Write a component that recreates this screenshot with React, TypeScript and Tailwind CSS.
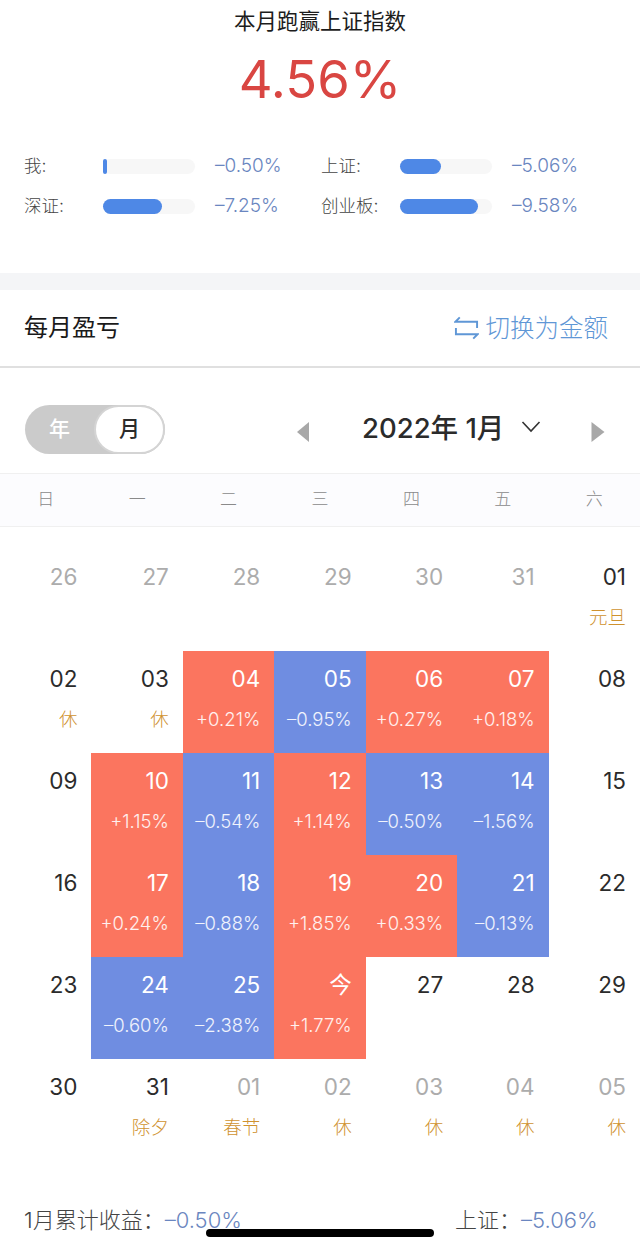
const FONT = '[font-family:Inter,"Noto_Sans_CJK_SC",sans-serif]';

const stats = [
  { label: '我:', pct: 4, value: '–0.50%' },
  { label: '上证:', pct: 45, value: '–5.06%' },
  { label: '深证:', pct: 64, value: '–7.25%' },
  { label: '创业板:', pct: 85, value: '–9.58%' },
];

type Day = { d: string; sub?: string; tone?: 'up' | 'down'; muted?: boolean };

const days: Day[] = [
  { d: '26', muted: true },
  { d: '27', muted: true },
  { d: '28', muted: true },
  { d: '29', muted: true },
  { d: '30', muted: true },
  { d: '31', muted: true },
  { d: '01', sub: '元旦' },
  { d: '02', sub: '休' },
  { d: '03', sub: '休' },
  { d: '04', sub: '+0.21%', tone: 'up' },
  { d: '05', sub: '–0.95%', tone: 'down' },
  { d: '06', sub: '+0.27%', tone: 'up' },
  { d: '07', sub: '+0.18%', tone: 'up' },
  { d: '08' },
  { d: '09' },
  { d: '10', sub: '+1.15%', tone: 'up' },
  { d: '11', sub: '–0.54%', tone: 'down' },
  { d: '12', sub: '+1.14%', tone: 'up' },
  { d: '13', sub: '–0.50%', tone: 'down' },
  { d: '14', sub: '–1.56%', tone: 'down' },
  { d: '15' },
  { d: '16' },
  { d: '17', sub: '+0.24%', tone: 'up' },
  { d: '18', sub: '–0.88%', tone: 'down' },
  { d: '19', sub: '+1.85%', tone: 'up' },
  { d: '20', sub: '+0.33%', tone: 'up' },
  { d: '21', sub: '–0.13%', tone: 'down' },
  { d: '22' },
  { d: '23' },
  { d: '24', sub: '–0.60%', tone: 'down' },
  { d: '25', sub: '–2.38%', tone: 'down' },
  { d: '今', sub: '+1.77%', tone: 'up' },
  { d: '27' },
  { d: '28' },
  { d: '29' },
  { d: '30' },
  { d: '31', sub: '除夕' },
  { d: '01', sub: '春节', muted: true },
  { d: '02', sub: '休', muted: true },
  { d: '03', sub: '休', muted: true },
  { d: '04', sub: '休', muted: true },
  { d: '05', sub: '休', muted: true },
];

function DayCell({ day }: { day: Day }) {
  const bg = day.tone === 'up' ? 'bg-[#fb755f]' : day.tone === 'down' ? 'bg-[#6f8de1]' : '';
  const numColor = day.tone ? 'text-white' : day.muted ? 'text-[#acacac]' : 'text-[#2b2b2b]';
  const subClass = day.tone ? 'font-light text-white/90' : 'font-light text-[#cf922f]';
  return (
    <div className={`flex h-[102px] flex-col items-end pr-[14px] ${bg}`}>
      <div className={`mt-[14px] h-[28px] text-[22.5px] leading-[28px] ${numColor}`}>{day.d}</div>
      {day.sub && <div className={`mt-[14px] text-[18.5px] leading-[24px] ${subClass}`}>{day.sub}</div>}
    </div>
  );
}

export default function App() {
  return (
    <div className={`relative h-[1249px] w-[640px] overflow-hidden bg-white ${FONT}`}>
      <div className="pt-[8px] text-center text-[21.5px] leading-[26px] text-[#1c1c1c]">本月跑赢上证指数</div>
      <div className="mt-[7px] text-center text-[52.5px] leading-[76px] text-[#d94642]">4.56%</div>

      <div className="mt-[39px] grid grid-cols-[297px_1fr] gap-y-[20px] pl-[24px]">
        {stats.map((s) => (
          <div key={s.label} className="flex h-[20px] items-center">
            <div className="w-[79px] text-[17.5px] font-light text-[#444]">{s.label}</div>
            <div className="h-[15px] w-[92px] rounded-full bg-[#f7f7f7]">
              <div className="h-full rounded-full bg-[#4e88e6]" style={{ width: `${s.pct}%` }} />
            </div>
            <div className="ml-[20px] text-[19px] font-light text-[#6a86c0]">{s.value}</div>
          </div>
        ))}
      </div>

      <div className="mt-[57px] h-[17px] bg-[#f4f5f7]" />

      <div className="flex h-[78px] items-center justify-between border-b-2 border-[#e0e0e0] pr-[32px] pl-[24px]">
        <div className="text-[24px] text-[#1a1a1a]">每月盈亏</div>
        <div className="flex items-center gap-[7px] text-[24.5px] font-light text-[#5f97d6]">
          <svg width="25" height="26" viewBox="0 0 26 26" fill="none" stroke="#5f97d6" strokeWidth="2">
            <path d="M6 2 L1.5 6.5 H24 V13" />
            <path d="M20 24 L24.5 19.5 H2 V13" />
          </svg>
          <span>切换为金额</span>
        </div>
      </div>

      <div className="flex h-[105px] items-center pt-[18px] pb-[1px] pl-[25px]">
        <div className="relative flex h-[49px] w-[140px] items-center rounded-full bg-[#cbcbcb]">
          <span className="ml-[24px] text-[21px] font-medium text-white">年</span>
          <span className="absolute top-0 right-0 flex h-[49px] w-[71px] items-center justify-center rounded-full border-2 border-[#d4d4d4] bg-white text-[21px] font-medium text-[#2b2b2b]">月</span>
        </div>
        <svg className="mt-[6px] ml-[132px]" width="12" height="20" viewBox="0 0 12 20">
          <path d="M12 0 V20 L0 10 Z" fill="#a8a8a8" />
        </svg>
        <div className="ml-[53px] text-[27.5px] font-medium text-[#2b2b2b]">2022年 1月</div>
        <svg className="mb-[5px] ml-[17px]" width="20" height="14" viewBox="0 0 20 14" fill="none" stroke="#333" strokeWidth="1.6">
          <path d="M1.5 2 L10 11 L18.5 2" />
        </svg>
        <svg className="mt-[6px] ml-[50px]" width="14" height="20" viewBox="0 0 13 20">
          <path d="M0 0 V20 L13 10 Z" fill="#a8a8a8" />
        </svg>
      </div>

      <div className="grid h-[54px] grid-cols-7 items-center border-y border-[#f0f0f0] bg-[#fcfcfe]">
        {['日', '一', '二', '三', '四', '五', '六'].map((w) => (
          <div key={w} className="text-center text-[17px] font-light text-[#8a8a8a]">{w}</div>
        ))}
      </div>

      <div className="mt-[22px] grid grid-cols-7">
        {days.map((day, i) => (
          <DayCell key={i} day={day} />
        ))}
      </div>

      <div className="mt-[44px] flex text-[22px] leading-[30px] font-light text-[#444]">
        <div className="w-[455px] pl-[24px]">
          1月累计收益：<span className="text-[#6a86c0]">–0.50%</span>
        </div>
        <div>
          上证：<span className="text-[#6a86c0]">–5.06%</span>
        </div>
      </div>

      <div className="absolute top-[1229px] left-[206px] h-[8px] w-[228px] rounded-full bg-black" />
    </div>
  );
}
